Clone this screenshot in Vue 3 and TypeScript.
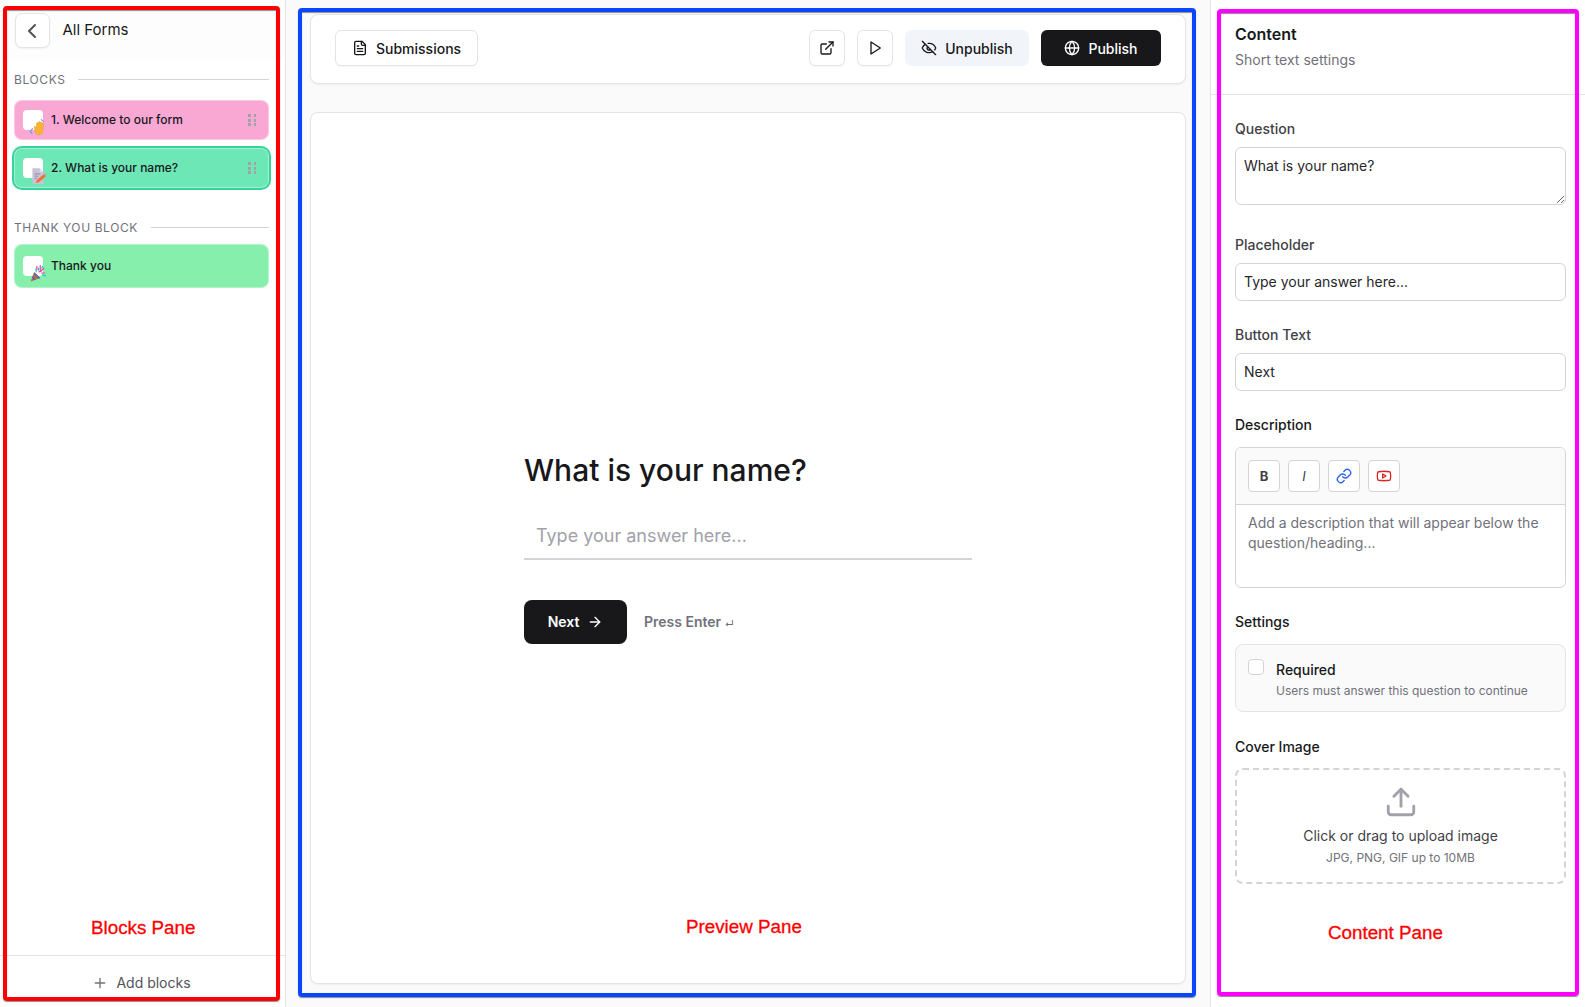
<script setup lang="ts">
const question = 'What is your name?'
const placeholder = 'Type your answer here...'
</script>

<template>
  <div class="app">
    <aside class="blocks">
      <header class="blocks-head">
        <button class="back" aria-label="Back">
          <svg width="24" height="24" viewBox="0 0 24 24" fill="none" stroke="#52525b" stroke-width="2" stroke-linecap="round" stroke-linejoin="round"><path d="m15 18-6-6 6-6" /></svg>
        </button>
        <span class="all-forms">All Forms</span>
      </header>
      <div class="blocks-body">
        <div class="section-label"><span>BLOCKS</span><i></i></div>
        <div class="block pink">
          <span class="tile">
            <svg class="emoji" viewBox="0 0 16 16">
              <path d="M1 11.500c.3 1 .8 1.600 1.600 2M3 9.500c-.5.4-.9 1-.7 1.600M11 1.500c1 .3 1.600 1 1.800 1.800" fill="none" stroke="#5b9be0" stroke-width="1" stroke-linecap="round" />
              <path d="M5.500 12.500 4.600 8.200c-.2-.9 1-1.200 1.300-.4l.6 1.200.3-4.200c.1-1 1.400-.9 1.400 0l.2-1c.2-.9 1.500-.7 1.500.2l.3-.3c.6-.6 1.500 0 1.300.8l.2 0c.8-.2 1.300.4 1.100 1.100l-.7 6.400c-.2 1.900-1.600 3-3.400 3-1.500 0-2.400-.8-2.700-2.500Z" fill="#f9b233" stroke="#e99a1c" stroke-width=".4" />
            </svg>
          </span>
          <span class="block-text">1. Welcome to our form</span>
          <span class="grip"><i v-for="n in 6" :key="n"></i></span>
        </div>
        <div class="block mint selected">
          <span class="tile">
            <svg class="emoji" viewBox="0 0 16 16">
              <path d="M3 2h6.500L13 5.500V16H3Z" fill="#c9c3d6" />
              <path d="M9.500 2v3.500H13Z" fill="#e4e0ec" />
              <path d="M5 7h5M5 9h3M5 11h2" stroke="#8f89a3" stroke-width=".8" />
              <path d="m6 15 1-2.600 6-5 1.800 1.900-6 5.200Z" fill="#f0703a" />
              <path d="m13 7.400.9-.8 1.800 1.900-.9.8Z" fill="#e8917b" />
            </svg>
          </span>
          <span class="block-text">2. What is your name?</span>
          <span class="grip"><i v-for="n in 6" :key="n"></i></span>
        </div>
        <div class="section-label thanks"><span>THANK YOU BLOCK</span><i></i></div>
        <div class="block green">
          <span class="tile">
            <svg class="emoji" viewBox="0 0 16 16">
              <path d="M1.500 15.500 4.500 7l5.500 5.500Z" fill="#b5762a" />
              <path d="M3.400 10.200 6 13.700l-2 .8-1.300-2.300ZM5 7.500l5 5-1.400.6-4.200-4.200Z" fill="#6a5acd" />
              <path d="M7 2v3M10 1.500v3.500M13 4l-2.500 2.500M14 8h-3M9 7l1.500-1" stroke="#ec4899" stroke-width="1.100" stroke-linecap="round" fill="none" />
              <path d="M8.500 3.500v2M12 2l-.5 2M14.500 10.500l-2.500-1M6 4.500 6.500 7" stroke="#22b8d9" stroke-width="1" stroke-linecap="round" fill="none" />
            </svg>
          </span>
          <span class="block-text">Thank you</span>
        </div>
      </div>
      <footer class="blocks-foot">
        <svg width="16" height="16" viewBox="0 0 24 24" fill="none" stroke="#71717a" stroke-width="2" stroke-linecap="round"><path d="M5 12h14M12 5v14" /></svg>
        <span>Add blocks</span>
      </footer>
    </aside>

    <main class="preview">
      <div class="toolbar card">
        <button class="btn outline">
          <svg width="16" height="16" viewBox="0 0 24 24" fill="none" stroke="currentColor" stroke-width="2" stroke-linecap="round" stroke-linejoin="round"><path d="M15 2H6a2 2 0 0 0-2 2v16a2 2 0 0 0 2 2h12a2 2 0 0 0 2-2V7Z" /><path d="M14 2v4a2 2 0 0 0 2 2h4" /><path d="M10 9H8M16 13H8M16 17H8" /></svg>
          Submissions
        </button>
        <span class="spacer"></span>
        <button class="btn outline square" aria-label="Open">
          <svg width="16" height="16" viewBox="0 0 24 24" fill="none" stroke="currentColor" stroke-width="2" stroke-linecap="round" stroke-linejoin="round"><path d="M15 3h6v6" /><path d="M10 14 21 3" /><path d="M18 13v6a2 2 0 0 1-2 2H5a2 2 0 0 1-2-2V8a2 2 0 0 1 2-2h6" /></svg>
        </button>
        <button class="btn outline square" aria-label="Play">
          <svg width="16" height="16" viewBox="0 0 24 24" fill="none" stroke="currentColor" stroke-width="2" stroke-linecap="round" stroke-linejoin="round"><polygon points="6 3 20 12 6 21 6 3" /></svg>
        </button>
        <button class="btn soft">
          <svg width="16" height="16" viewBox="0 0 24 24" fill="none" stroke="currentColor" stroke-width="2" stroke-linecap="round" stroke-linejoin="round"><path d="M10.733 5.076a10.744 10.744 0 0 1 11.205 6.575 1 1 0 0 1 0 .696 10.747 10.747 0 0 1-1.444 2.490" /><path d="M14.084 14.158a3 3 0 0 1-4.242-4.242" /><path d="M17.479 17.499a10.750 10.750 0 0 1-15.417-5.151 1 1 0 0 1 0-.696 10.750 10.750 0 0 1 4.446-5.143" /><path d="m2 2 20 20" /></svg>
          Unpublish
        </button>
        <button class="btn dark">
          <svg width="16" height="16" viewBox="0 0 24 24" fill="none" stroke="currentColor" stroke-width="2" stroke-linecap="round" stroke-linejoin="round"><circle cx="12" cy="12" r="10" /><path d="M12 2a14.500 14.500 0 0 0 0 20 14.500 14.500 0 0 0 0-20" /><path d="M2 12h20" /></svg>
          Publish
        </button>
      </div>
      <section class="stage card">
        <div class="form">
          <h1>{{ question }}</h1>
          <input class="answer" type="text" :placeholder="placeholder" />
          <div class="actions">
            <button class="next">
              Next
              <svg width="16" height="16" viewBox="0 0 24 24" fill="none" stroke="currentColor" stroke-width="2" stroke-linecap="round" stroke-linejoin="round"><path d="M5 12h14" /><path d="m12 5 7 7-7 7" /></svg>
            </button>
            <span class="hint">Press Enter <span class="ret">↵</span></span>
          </div>
        </div>
      </section>
    </main>

    <aside class="content">
      <header class="content-head">
        <h2>Content</h2>
        <p>Short text settings</p>
      </header>
      <div class="fields">
        <label class="label">Question</label>
        <textarea class="control area" :value="question"></textarea>
        <label class="label after-area">Placeholder</label>
        <input class="control" :value="placeholder" />
        <label class="label">Button Text</label>
        <input class="control" value="Next" />

        <div class="label strong">Description</div>
        <div class="editor">
          <div class="editor-tools">
            <button class="tool bold">B</button>
            <button class="tool italic">I</button>
            <button class="tool" aria-label="Link">
              <svg width="16" height="16" viewBox="0 0 24 24" fill="none" stroke="#2563eb" stroke-width="2" stroke-linecap="round" stroke-linejoin="round"><path d="M10 13a5 5 0 0 0 7.540.54l3-3a5 5 0 0 0-7.070-7.070l-1.720 1.710" /><path d="M14 11a5 5 0 0 0-7.540-.54l-3 3a5 5 0 0 0 7.070 7.070l1.710-1.710" /></svg>
            </button>
            <button class="tool" aria-label="YouTube">
              <svg width="16" height="16" viewBox="0 0 24 24" fill="none" stroke="#dc2626" stroke-width="2" stroke-linecap="round" stroke-linejoin="round"><path d="M2.500 17a24.120 24.120 0 0 1 0-10 2 2 0 0 1 1.400-1.400 49.560 49.560 0 0 1 16.200 0A2 2 0 0 1 21.500 7a24.120 24.120 0 0 1 0 10 2 2 0 0 1-1.400 1.400 49.550 49.550 0 0 1-16.200 0A2 2 0 0 1 2.500 17" /><path d="m10 15 5-3-5-3z" /></svg>
            </button>
          </div>
          <div class="editor-text">Add a description that will appear below the question/heading...</div>
        </div>

        <div class="label strong">Settings</div>
        <div class="setting">
          <input class="check" type="checkbox" />
          <div>
            <div class="setting-title">Required</div>
            <div class="setting-sub">Users must answer this question to continue</div>
          </div>
        </div>

        <div class="label strong cover">Cover Image</div>
        <div class="upload">
          <svg width="34" height="34" viewBox="0 0 24 24" fill="none" stroke="#a1a1aa" stroke-width="2" stroke-linecap="round" stroke-linejoin="round"><path d="M21 15v4a2 2 0 0 1-2 2H5a2 2 0 0 1-2-2v-4" /><polyline points="17 8 12 3 7 8" /><line x1="12" y1="3" x2="12" y2="15" /></svg>
          <div class="upload-title">Click or drag to upload image</div>
          <div class="upload-sub">JPG, PNG, GIF up to 10MB</div>
        </div>
      </div>
    </aside>

    <div class="mark red"></div>
    <div class="mark blue"></div>
    <div class="mark magenta"></div>
    <span class="mark-text t1">Blocks Pane</span>
    <span class="mark-text t2">Preview Pane</span>
    <span class="mark-text t3">Content Pane</span>
  </div>
</template>

<style scoped>
* { box-sizing: border-box; }
button, input, textarea { font-family: inherit; margin: 0; }
.app {
  position: relative;
  display: flex;
  width: 1585px;
  height: 1007px;
  overflow: hidden;
  background: #fafafa;
  color: #18181b;
  font-family: Inter, "Liberation Sans", sans-serif;
}

/* Blocks pane */
.blocks {
  width: 286px;
  flex: none;
  display: flex;
  flex-direction: column;
  background: #fff;
  border-right: 1px solid #e4e4e7;
}
.blocks-head {
  height: 60px;
  flex: none;
  display: flex;
  align-items: flex-start;
  gap: 13px;
  padding: 13px 0 0 14.5px;
  background: #fdfdfd;
}
.back {
  width: 35px;
  height: 35px;
  display: flex;
  align-items: center;
  justify-content: center;
  padding: 0;
  background: #fff;
  border: 1px solid #e4e4e7;
  border-radius: 7px;
  box-shadow: 0 1px 2px rgba(0, 0, 0, .06);
}
.all-forms { font-size: 15px; line-height: 33px; }
.blocks-body { flex: 1; padding: 11px 16px 0 14px; }
.section-label {
  display: flex;
  align-items: center;
  gap: 13px;
  height: 16px;
  margin-bottom: 13px;
  font-size: 12px;
  letter-spacing: .6px;
  color: #71717a;
}
.section-label i { flex: 1; height: 1px; margin-top: 1px; background: #d4d4d8; }
.section-label.thanks { margin: 31px 0 9px; }
.block {
  position: relative;
  display: flex;
  align-items: center;
  height: 40px;
  padding: 0 9px 0 8px;
  border-radius: 8px;
  border: 1px solid rgba(255, 255, 255, .35);
  font-size: 12px;
  font-weight: 500;
}
.pink { background: #f9a8d4; }
.mint { background: #6ee7b7; margin-top: 8px; }
.selected { box-shadow: 0 0 0 2px #34d399; }
.green { background: #86efac; height: 44px; }
.tile {
  position: relative;
  width: 20px;
  height: 20px;
  flex: none;
  background: #fff;
  border-radius: 4px;
  margin-right: 8px;
}
.emoji { position: absolute; right: -4px; bottom: -6px; width: 18px; height: 18px; }
.block-text { flex: 1; padding-bottom: 2px; }
.grip {
  display: grid;
  grid-template-columns: 2.5px 2.5px;
  column-gap: 3px;
  row-gap: 1.5px;
  margin-right: 3px;
}
.grip i { width: 2.5px; height: 3px; background: #a1a1aa; }
.blocks-foot {
  height: 52px;
  flex: none;
  display: flex;
  align-items: center;
  justify-content: center;
  gap: 8px;
  padding: 2px 2px 0 0;
  border-top: 1px solid #e4e4e7;
  font-size: 14px;
  color: #52525b;
}

/* Preview */
.preview {
  flex: 1;
  min-width: 0;
  display: flex;
  flex-direction: column;
  gap: 28px;
  padding: 14px 24px 23px 24px;
  border-right: 1px solid #e4e4e7;
}
.card {
  background: #fff;
  border: 1px solid #e4e4e7;
  border-radius: 8px;
  box-shadow: 0 1px 2px rgba(0, 0, 0, .05);
}
.toolbar {
  height: 70px;
  flex: none;
  display: flex;
  align-items: center;
  gap: 12px;
  padding: 0 24px 2px 24px;
}
.spacer { flex: 1; }
.btn {
  height: 36px;
  display: flex;
  align-items: center;
  justify-content: center;
  gap: 8px;
  padding: 0 16px;
  border-radius: 6px;
  border: 1px solid transparent;
  font-size: 14px;
  font-weight: 500;
  color: #18181b;
  background: transparent;
}
.outline { border-color: #e4e4e7; background: #fff; box-shadow: 0 1px 1px rgba(0, 0, 0, .03); }
.square { width: 36px; padding: 0; }
.soft { background: #f1f5f9; width: 124px; padding: 0; }
.dark { background: #18181b; color: #fff; width: 120px; padding: 0; }
.stage {
  flex: 1;
  display: flex;
  align-items: center;
  justify-content: center;
}
.form { width: 448px; margin-bottom: 3px; }
h1 {
  margin: 0 0 24px;
  font-size: 30px;
  line-height: 40px;
  font-weight: 500;
}
.answer {
  display: block;
  width: 100%;
  height: 46px;
  padding: 0 12px;
  border: 0;
  border-bottom: 2px solid #d4d4d8;
  outline: none;
  background: transparent;
  font-size: 18px;
  color: #18181b;
}
.answer::placeholder { color: #a1a1aa; opacity: 1; }
.actions { display: flex; align-items: center; gap: 17px; margin-top: 40px; }
.next {
  width: 103px;
  height: 44px;
  display: flex;
  align-items: center;
  justify-content: center;
  gap: 8px;
  border: 0;
  border-radius: 8px;
  background: #18181b;
  color: #fff;
  font-size: 14px;
  font-weight: 600;
}
.hint { font-size: 14px; font-weight: 600; color: #71717a; }
.ret { font-size: 9px; }

/* Content pane */
.content {
  width: 374px;
  flex: none;
  display: flex;
  flex-direction: column;
  background: #fff;
}
.content-head {
  height: 95px;
  flex: none;
  padding: 23px 19px 0 24px;
  border-bottom: 1px solid #e4e4e7;
}
h2 { margin: 0; font-size: 16px; line-height: 22px; font-weight: 600; }
.content-head p { margin: 5px 0 0; font-size: 14px; line-height: 20px; color: #71717a; }
.fields { display: flex; flex-direction: column; padding: 0 19px 0 24px; }
.label {
  height: 20px;
  margin: 24px 0 8px;
  font-size: 14px;
  line-height: 20px;
  font-weight: 500;
  color: #3f3f46;
}
.label.after-area { margin-top: 30px; }
.label.strong { color: #18181b; margin-bottom: 12px; }
.control {
  display: block;
  width: 100%;
  height: 38px;
  padding: 0 8px 2px;
  border: 1px solid #d4d4d8;
  border-radius: 6px;
  background: #fff;
  outline: none;
  font-size: 14px;
  color: #27272a;
}
.area { height: 58px; padding: 8px 8px; line-height: 20px; resize: vertical; }
.editor { height: 141px; border: 1px solid #d4d4d8; border-radius: 6px; overflow: hidden; }
.editor-tools {
  height: 57px;
  display: flex;
  align-items: center;
  gap: 8px;
  padding: 0 12px;
  background: #fafafa;
  border-bottom: 1px solid #d4d4d8;
}
.tool {
  width: 32px;
  height: 32px;
  display: flex;
  align-items: center;
  justify-content: center;
  padding: 0;
  border: 1px solid #d4d4d8;
  border-radius: 4px;
  background: #fff;
  color: #3f3f46;
  font-size: 13px;
}
.bold { font-weight: 700; }
.italic { font-style: italic; }
.editor-text {
  padding: 8px 12px;
  font-size: 14px;
  line-height: 20px;
  color: #71717a;
}
.setting {
  height: 68px;
  display: flex;
  gap: 12px;
  padding: 14px 12px 0;
  border: 1px solid #e4e4e7;
  border-radius: 8px;
  background: #fafafa;
}
.check {
  appearance: none;
  width: 16px;
  height: 16px;
  flex: none;
  margin: 0;
  border: 1px solid #d4d4d8;
  border-radius: 4px;
  background: #fff;
}
.setting-title { font-size: 14px; line-height: 20px; font-weight: 500; margin-top: 1px; }
.setting-sub { font-size: 12px; line-height: 16px; color: #71717a; margin-top: 3px; }
.label.cover { margin: 25px 0 11px; }
.upload {
  height: 116px;
  display: flex;
  flex-direction: column;
  align-items: center;
  padding-top: 15px;
  border: 2px dashed #d4d4d8;
  border-radius: 8px;
}
.upload-title { margin-top: 7px; font-size: 14px; line-height: 20px; color: #3f3f46; }
.upload-sub { margin-top: 4px; font-size: 12px; line-height: 16px; color: #71717a; }

/* Annotation overlay */
.mark {
  position: absolute;
  border: 4px solid;
  border-radius: 4px;
  box-shadow: 0 1px 1px rgba(0, 0, 0, .45), inset 0 1px 1px rgba(0, 0, 0, .45);
  pointer-events: none;
}
.red { left: 3px; top: 6px; width: 277px; height: 995px; border-color: #ff0000; }
.blue { left: 298px; top: 8px; width: 898px; height: 989px; border-color: #0a46ff; }
.magenta { left: 1217px; top: 9px; width: 362px; height: 987px; border-color: #ff00ff; }
.mark-text {
  position: absolute;
  font-family: "Liberation Sans", Arial, sans-serif;
  font-size: 18.8px;
  line-height: 22px;
  -webkit-text-stroke: .3px #f00;
  color: #f00;
}
.t1 { left: 91px; top: 917px; }
.t2 { left: 686px; top: 916px; }
.t3 { left: 1328px; top: 922px; }
</style>
